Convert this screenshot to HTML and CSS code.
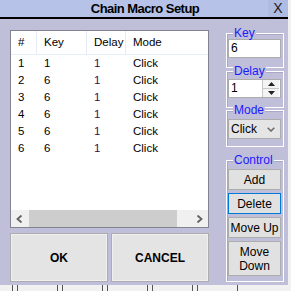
FILE: index.html
```
<!DOCTYPE html>
<html lang="en">
<head>
    <meta charset="UTF-8">
    <title>Chain Macro Setup</title>
    <link rel="stylesheet" href="styles.css">
</head>
<body>

    <div class="window">
        <!-- Title bar -->
        <div class="titlebar">
            <div class="title">Chain Macro Setup</div>
            <div class="close">X</div>
        </div>

        <div class="content">
            <!-- Left side: list + OK / CANCEL -->
            <div class="left">
                <div class="list">
                    <div class="list-head">
                        <div class="cell">#</div>
                        <div class="cell">Key</div>
                        <div class="cell">Delay</div>
                        <div class="cell">Mode</div>
                    </div>
                    <div class="list-body">
                        <div class="row"><span>1</span><span>1</span><span class="delay">1</span><span>Click</span></div>
                        <div class="row"><span>2</span><span>6</span><span class="delay">1</span><span>Click</span></div>
                        <div class="row"><span>3</span><span>6</span><span class="delay">1</span><span>Click</span></div>
                        <div class="row"><span>4</span><span>6</span><span class="delay">1</span><span>Click</span></div>
                        <div class="row"><span>5</span><span>6</span><span class="delay">1</span><span>Click</span></div>
                        <div class="row"><span>6</span><span>6</span><span class="delay">1</span><span>Click</span></div>
                    </div>
                    <div class="hscroll">
                        <div class="scroll-arrow">
                            <svg width="7" height="8" viewBox="0 0 7 8"><path d="M5.5 0.5 L1.5 4 L5.5 7.5" fill="none" stroke="#606060" stroke-width="1.8"/></svg>
                        </div>
                        <div class="track"><div class="thumb"></div></div>
                        <div class="scroll-arrow">
                            <svg width="7" height="8" viewBox="0 0 7 8"><path d="M1.5 0.5 L5.5 4 L1.5 7.5" fill="none" stroke="#606060" stroke-width="1.8"/></svg>
                        </div>
                    </div>
                </div>
                <div class="actions">
                    <button class="big-btn">OK</button>
                    <button class="big-btn">CANCEL</button>
                </div>
            </div>

            <!-- Right side: settings groups -->
            <div class="right">
                <fieldset class="group group-key">
                    <legend>Key</legend>
                    <div class="field">6</div>
                </fieldset>

                <fieldset class="group group-delay">
                    <legend>Delay</legend>
                    <div class="spin">
                        <div class="spin-value">1</div>
                        <div class="spin-btns">
                            <div class="spin-btn">
                                <svg width="7" height="4" viewBox="0 0 7 4"><path d="M0 4 L3.5 0 L7 4 Z" fill="#222"/></svg>
                            </div>
                            <div class="spin-btn">
                                <svg width="7" height="4" viewBox="0 0 7 4"><path d="M0 0 L3.5 4 L7 0 Z" fill="#222"/></svg>
                            </div>
                        </div>
                    </div>
                </fieldset>

                <fieldset class="group group-mode">
                    <legend>Mode</legend>
                    <div class="select">
                        <span>Click</span>
                        <svg width="8" height="5" viewBox="0 0 8 5"><path d="M0.7 0.7 L4 4 L7.3 0.7" fill="none" stroke="#6d6d6d" stroke-width="1.6"/></svg>
                    </div>
                </fieldset>

                <fieldset class="group group-control">
                    <legend>Control</legend>
                    <button class="small-btn">Add</button>
                    <button class="small-btn focused">Delete</button>
                    <button class="small-btn">Move Up</button>
                    <button class="small-btn tall">Move<br>Down</button>
                </fieldset>
            </div>
        </div>
    </div>

    <div class="strip"></div>

</body>
</html>
```

FILE: styles.css
```
body {
    margin: 0;
    padding: 0;
    width: 291px;
    height: 291px;
    overflow: hidden;
    background-color: #f1f1f1;
    font-family: "Liberation Sans", Arial, sans-serif;
    font-size: 12px;
    color: #000;
}

/* Window */
.window {
    width: 288px;
    height: 285px;
    background-color: #c0bfda;
}

.titlebar {
    height: 17px;
    display: flex;
    align-items: center;
    background-color: #b6c2e8;
    border-bottom: 2px solid #000;
}

.title {
    flex: 1;
    text-align: center;
    padding-left: 22px;
    font-weight: bold;
    font-size: 13px;
    letter-spacing: -0.55px;
}

.close {
    width: 20px;
    height: 17px;
    line-height: 17px;
    text-align: center;
    font-size: 14px;
    color: #202020;
    background-color: #aebbe3;
}

.content {
    display: flex;
    padding-left: 10px;
    gap: 17px;
}

/* Left column */
.left {
    width: 199px;
    padding-top: 11px;
}

.list {
    height: 198px;
    box-sizing: border-box;
    border: 1px solid #828290;
    background-color: #ffffff;
    display: flex;
    flex-direction: column;
}

.list-head {
    display: grid;
    grid-template-columns: 26px 50px 39px 1fr;
    height: 23px;
    border-bottom: 1px solid #e8eef7;
}

.list-head .cell {
    line-height: 23px;
    padding-left: 7px;
    font-size: 11.5px;
    border-right: 1px solid #e5ebf5;
}

.list-head .cell:last-child {
    border-right: none;
}

.list-body {
    flex: 1;
}

.row {
    display: grid;
    grid-template-columns: 26px 50px 39px 1fr;
    height: 17px;
    line-height: 17px;
    font-size: 11.5px;
}

.row span {
    padding-left: 7px;
}

.row .delay {
    color: #3e0d4a;
}

.hscroll {
    height: 17px;
    display: flex;
    background-color: #f0f0f0;
}

.scroll-arrow {
    width: 17px;
    display: flex;
    align-items: center;
    justify-content: center;
}

.track {
    flex: 1;
}

.thumb {
    margin-left: 1px;
    width: 148px;
    height: 17px;
    background-color: #cdcdcd;
}

.actions {
    display: flex;
    gap: 3px;
    margin-top: 5px;
}

.big-btn {
    width: 98px;
    height: 49px;
    background-color: #e4e4e4;
    border: 1px solid #adadad;
    box-shadow: inset 0 0 0 1px #f0f0f0;
    font-family: "Liberation Sans", Arial, sans-serif;
    font-weight: bold;
    font-size: 12px;
    color: #000;
    padding: 0;
}

/* Right column */
.right {
    width: 58px;
    padding-top: 8px;
    display: flex;
    flex-direction: column;
}

.group {
    margin: 0;
    padding: 0 2px 0 1px;
    border: 1px solid #ffffff;
    box-shadow: inset 1px 1px 0 #a9a8c2;
    min-width: 0;
}

.group legend {
    padding: 0 1px;
    margin-left: 5px;
    line-height: 12px;
    font-size: 12px;
    color: #1a1aff;
    background-color: #c0bfda;
}

.group-key {
    padding-bottom: 9px;
}

.group-delay {
    margin-top: -3px;
    padding-top: 2px;
    padding-bottom: 9px;
}

.group-mode {
    margin-top: -4px;
    padding-top: 3px;
    padding-bottom: 7px;
}

.group-control {
    margin-top: 7px;
    padding-top: 3px;
    padding-bottom: 5px;
    display: flex;
    flex-direction: column;
    gap: 3px;
}

.field {
    height: 19px;
    box-sizing: border-box;
    border: 1px solid #acacac;
    background-color: #ffffff;
    padding-left: 2px;
    line-height: 17px;
    font-size: 12px;
}

.spin {
    height: 19px;
    box-sizing: border-box;
    border: 1px solid #acacac;
    background-color: #ffffff;
    display: flex;
}

.spin-value {
    flex: 1;
    padding-left: 2px;
    line-height: 17px;
}

.spin-btns {
    width: 16px;
    display: flex;
    flex-direction: column;
    border-left: 1px solid #c8c8c8;
    margin-right: 1px;
}

.spin-btn {
    flex: 1;
    display: flex;
    align-items: center;
    justify-content: center;
    background-color: #f3f3f3;
}

.spin-btn:first-child {
    border-bottom: 1px solid #c8c8c8;
}

.select {
    height: 20px;
    box-sizing: border-box;
    border: 1px solid #acacac;
    background-color: #e5e5e5;
    display: flex;
    align-items: center;
    justify-content: space-between;
    padding: 0 5px 0 2px;
    font-size: 12px;
}

.small-btn {
    height: 21px;
    background-color: #e1e1e1;
    border: 1px solid #adadad;
    font-family: "Liberation Sans", Arial, sans-serif;
    font-size: 12px;
    color: #000;
    padding: 0;
    line-height: 14px;
}

.small-btn.focused {
    border-color: #0078d7;
}

.small-btn.tall {
    height: 35px;
}

/* Background window peeking out at the bottom */
.strip {
    height: 6px;
    width: 240px;
    background-image: repeating-linear-gradient(90deg, transparent 0, transparent 12px, #555 12px, #555 13px, transparent 13px, transparent 17px, #555 17px, #555 18px, transparent 18px, transparent 45px);
}
```
